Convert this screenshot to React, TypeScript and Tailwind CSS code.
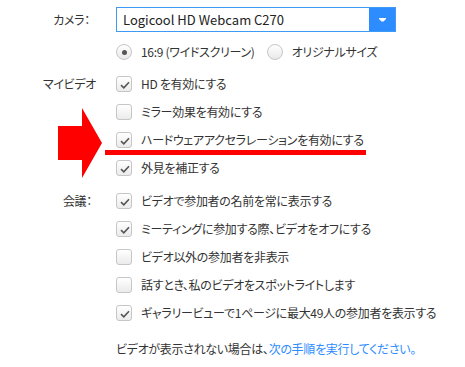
import React from 'react';

const Check = () => (
  <svg width="16" height="16" viewBox="0 0 16 16" className="absolute inset-0">
    <path d="M4 8.2 L6.8 10.8 L12 5.2" fill="none" stroke="#555" strokeWidth="1.6" />
  </svg>
);

function Checkbox({ checked, label }: { checked?: boolean; label: React.ReactNode }) {
  return (
    <div className="flex h-[28px] items-center">
      <span className="relative h-4 w-4 rounded-[3px] border border-[#c6c6c6] bg-gradient-to-b from-white to-[#ebebeb]">
        {checked && <Check />}
      </span>
      <span className="ml-[9px]">{label}</span>
    </div>
  );
}

function Radio({ selected, label }: { selected?: boolean; label: string }) {
  return (
    <div className="flex items-center">
      <span className="flex h-4 w-4 items-center justify-center rounded-full border border-[#c6c6c6] bg-gradient-to-b from-white to-[#e8e8e8]">
        {selected && <span className="h-[5px] w-[5px] rounded-full bg-[#555]" />}
      </span>
      <span className="ml-[9px]">{label}</span>
    </div>
  );
}

export default function App() {
  return (
    <div className="relative h-[367px] w-[465px] overflow-hidden bg-white pt-[7px] font-['Noto_Sans_CJK_JP',sans-serif] text-[12px] tracking-[-0.3px] text-[#333] [font-feature-settings:'palt']">
      {/* camera */}
      <div className="flex h-[25px] items-center">
        <div className="w-[96px] pr-[6px] text-right">カメラ：</div>
        <div className="ml-[20px] flex h-[25px] w-[280px] border border-[#3d9bf5] bg-white">
          <div className="flex flex-1 items-center pl-[6px] text-[13px] tracking-normal text-[#222]">Logicool HD Webcam C270</div>
          <div className="flex w-[26px] items-center justify-center bg-[#2d8cff]">
            <svg width="7" height="4" viewBox="0 0 7 4">
              <polygon points="0,0 7,0 7,1 4.5,3.5 2.5,3.5 0,1" fill="#fff" />
            </svg>
          </div>
        </div>
      </div>

      {/* aspect */}
      <div className="mt-[6px] flex h-[28px] items-center pl-[116px]">
        <Radio selected label="16:9 (ワイドスクリーン)" />
        <div className="ml-[12px]">
          <Radio label="オリジナルサイズ" />
        </div>
      </div>

      {/* my video */}
      <div className="mt-[4px] flex">
        <div className="flex h-[28px] w-[96px] items-center justify-end">マイビデオ</div>
        <div className="ml-[20px] flex flex-col">
          <Checkbox checked label="HD を有効にする" />
          <Checkbox label="ミラー効果を有効にする" />
          <Checkbox checked label="ハードウェアアクセラレーションを有効にする" />
          <Checkbox checked label="外見を補正する" />
        </div>
      </div>

      {/* meeting */}
      <div className="mt-[5px] flex">
        <div className="flex h-[28px] w-[96px] items-center justify-end pr-[4px]">会議：</div>
        <div className="ml-[20px] flex flex-col">
          <Checkbox checked label="ビデオで参加者の名前を常に表示する" />
          <Checkbox checked label="ミーティングに参加する際、ビデオをオフにする" />
          <Checkbox label="ビデオ以外の参加者を非表示" />
          <Checkbox label="話すとき、私のビデオをスポットライトします" />
          <Checkbox checked label="ギャラリービューで1ページに最大49人の参加者を表示する" />
        </div>
      </div>

      <div className="mt-[8px] flex h-[28px] items-center pl-[116px]">
        <span>ビデオが表示されない場合は、</span>
        <span className="text-[#2d8cff]">次の手順を実行してください。</span>
      </div>

      {/* annotation */}
      <svg width="44" height="70" viewBox="0 0 44 70" className="absolute left-[58px] top-[108px]">
        <polygon points="0,18 24,18 24,0 44,35 24,70 24,52 0,52" fill="#ff0000" />
      </svg>
      <div className="absolute left-[105px] top-[150px] h-[5px] w-[261px] bg-[#ff0000]" />
    </div>
  );
}
